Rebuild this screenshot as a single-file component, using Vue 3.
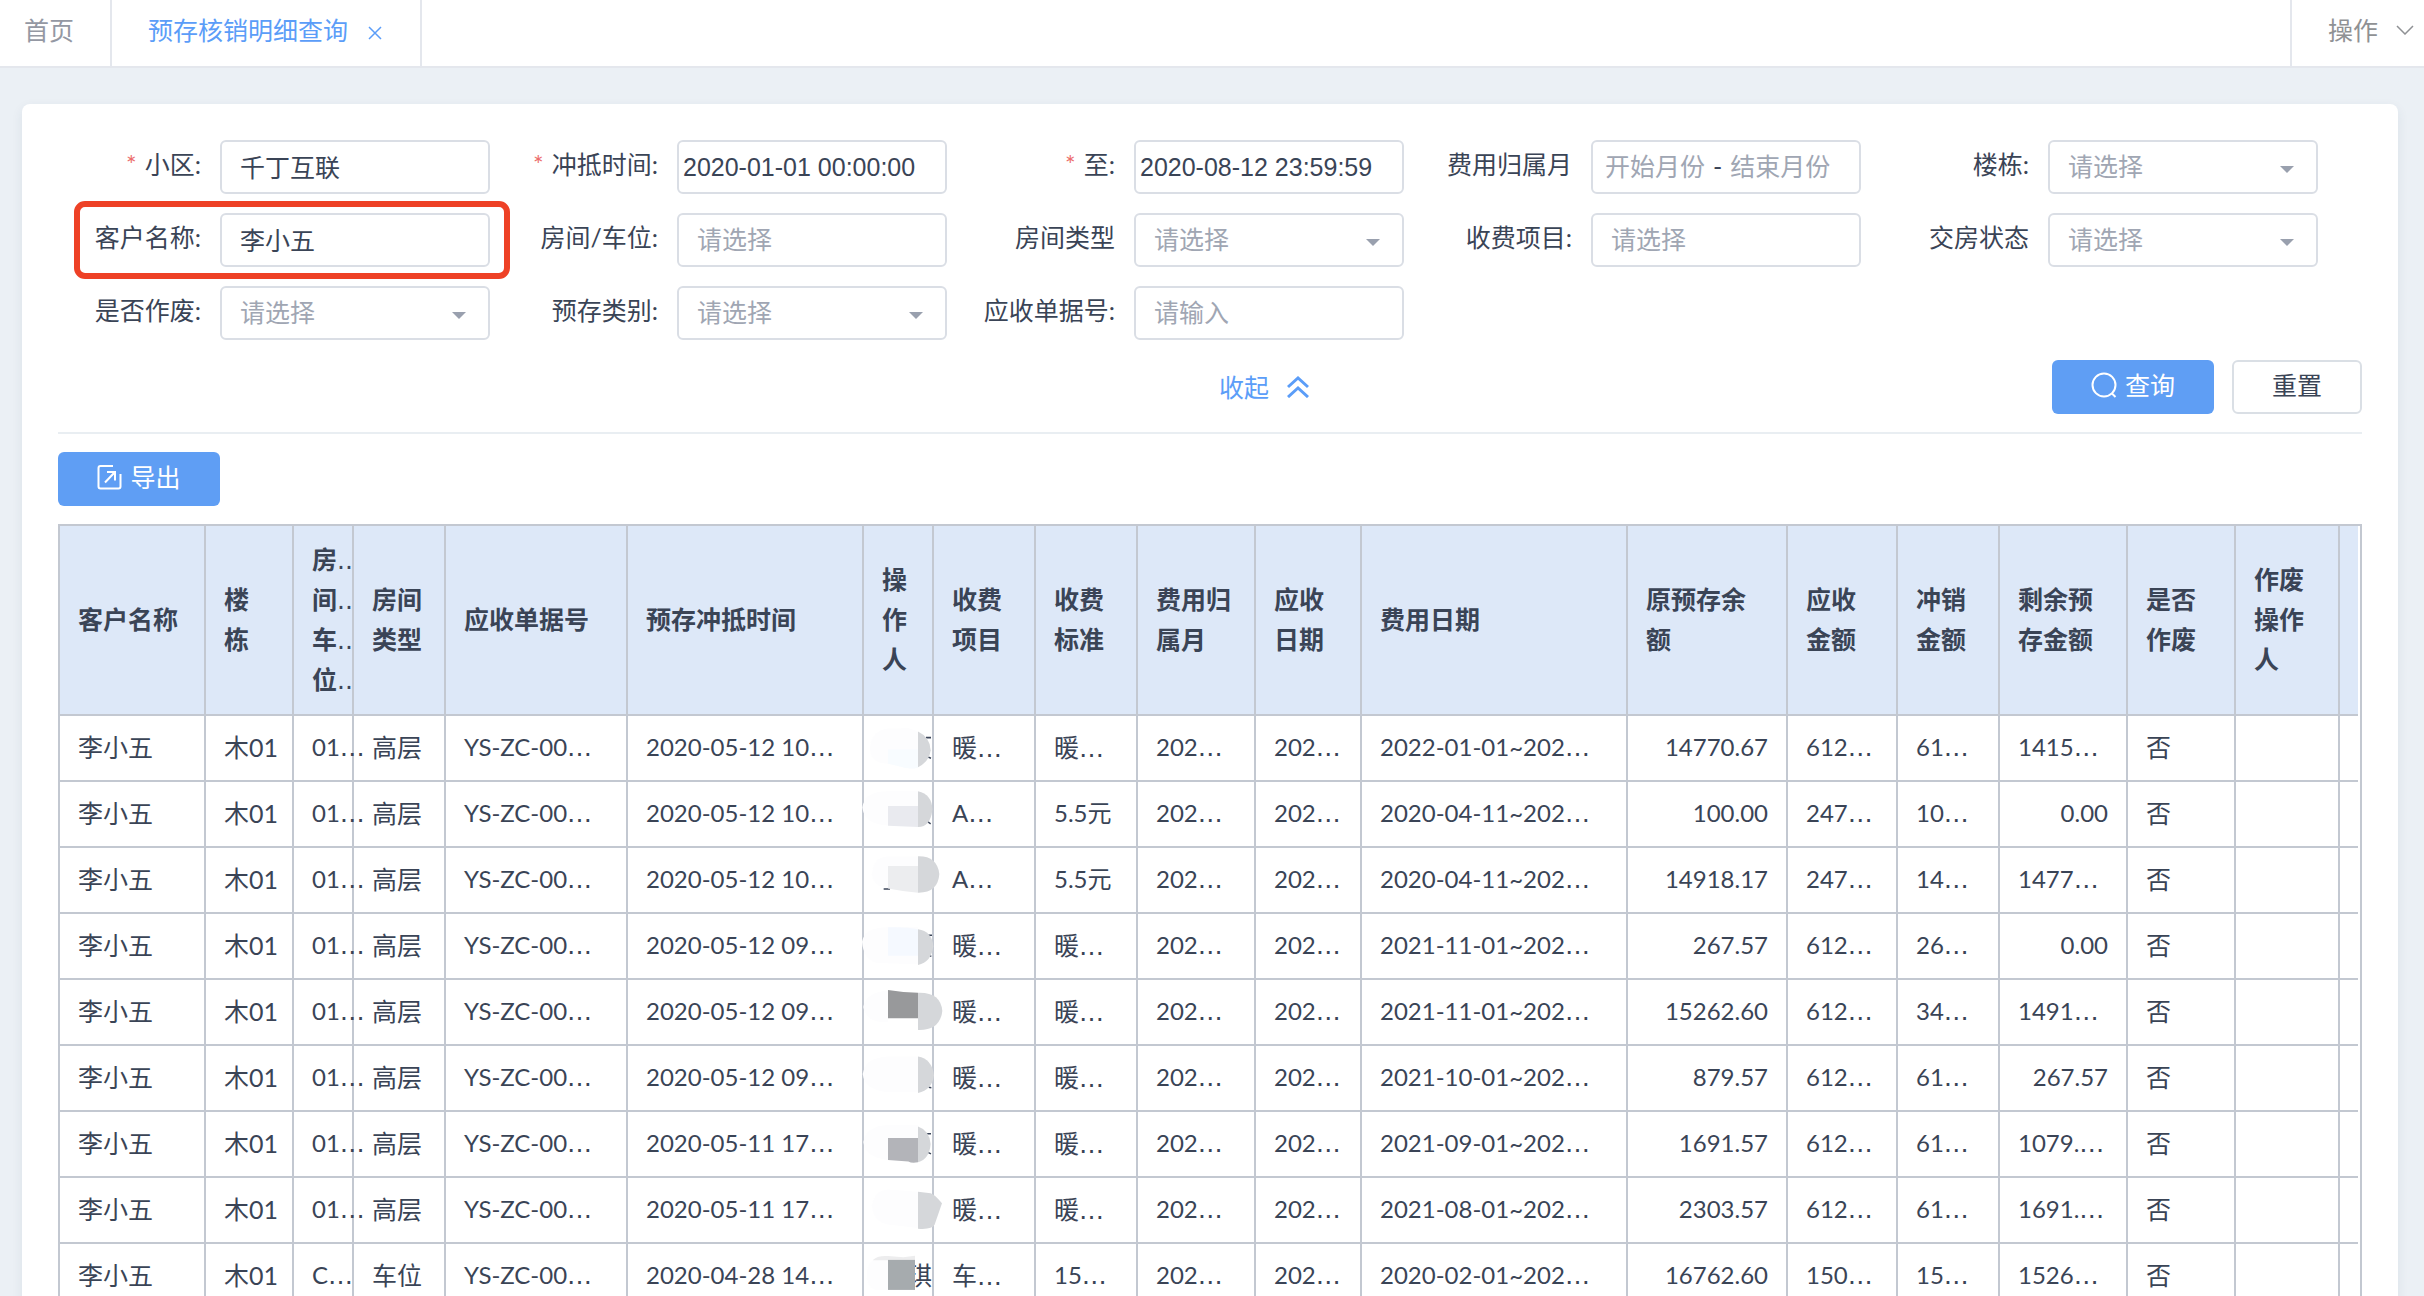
<script setup>
import { ref } from 'vue'

const fields = [
  { id: 'community', label: '小区:', required: true, type: 'text', value: '千丁互联' },
  { id: 'offset-from', label: '冲抵时间:', required: true, type: 'date', value: '2020-01-01 00:00:00' },
  { id: 'offset-to', label: '至:', required: true, type: 'date', value: '2020-08-12 23:59:59' },
  { id: 'fee-month', label: '费用归属月', type: 'range' },
  { id: 'building', label: '楼栋:', type: 'select' },
  { id: 'customer', label: '客户名称:', type: 'text', value: '李小五', marked: true },
  { id: 'room', label: '房间/车位:', type: 'text', placeholder: '请选择' },
  { id: 'room-type', label: '房间类型', type: 'select' },
  { id: 'fee-item', label: '收费项目:', type: 'text', placeholder: '请选择' },
  { id: 'handover', label: '交房状态', type: 'select' },
  { id: 'voided', label: '是否作废:', type: 'select' },
  { id: 'deposit-type', label: '预存类别:', type: 'select' },
  { id: 'bill-no', label: '应收单据号:', type: 'text', placeholder: '请输入' },
]

const columns = [
  { title: '客户名称', width: 146 },
  { title: '楼栋', width: 88 },
  { title: '房间车位', width: 60, clipped: true },
  { title: '房间类型', width: 92 },
  { title: '应收单据号', width: 182 },
  { title: '预存冲抵时间', width: 236 },
  { title: '操作人', width: 70 },
  { title: '收费项目', width: 102 },
  { title: '收费标准', width: 102 },
  { title: '费用归属月', width: 118 },
  { title: '应收日期', width: 106 },
  { title: '费用日期' },
  { title: '原预存余额', width: 160, right: true },
  { title: '应收金额', width: 110 },
  { title: '冲销金额', width: 102 },
  { title: '剩余预存金额', width: 128, right: true },
  { title: '是否作废', width: 108 },
  { title: '作废操作人', width: 104 },
  { title: '', width: 18 },
]

const row = (room, type, time, item, std, period, before, due, used, left, operator = '') => [
  '李小五', '木01', room, type, 'YS-ZC-00…', time, operator, item, std, '202…', '202…',
  period, before, due, used, left, '否', '', '',
]

const rows = [
  row('01…', '高层', '2020-05-12 10…', '暖…', '暖…', '2022-01-01~202…', '14770.67', '612…', '61…', '1415…'),
  row('01…', '高层', '2020-05-12 10…', 'A…', '5.5元', '2020-04-11~202…', '100.00', '247…', '10…', '0.00'),
  row('01…', '高层', '2020-05-12 10…', 'A…', '5.5元', '2020-04-11~202…', '14918.17', '247…', '14…', '1477…'),
  row('01…', '高层', '2020-05-12 09…', '暖…', '暖…', '2021-11-01~202…', '267.57', '612…', '26…', '0.00'),
  row('01…', '高层', '2020-05-12 09…', '暖…', '暖…', '2021-11-01~202…', '15262.60', '612…', '34…', '1491…'),
  row('01…', '高层', '2020-05-12 09…', '暖…', '暖…', '2021-10-01~202…', '879.57', '612…', '61…', '267.57'),
  row('01…', '高层', '2020-05-11 17…', '暖…', '暖…', '2021-09-01~202…', '1691.57', '612…', '61…', '1079.…'),
  row('01…', '高层', '2020-05-11 17…', '暖…', '暖…', '2021-08-01~202…', '2303.57', '612…', '61…', '1691.…'),
  row('C…', '车位', '2020-04-28 14…', '车…', '15…', '2020-02-01~202…', '16762.60', '150…', '15…', '1526…', '琪'),
]

const form = ref(Object.fromEntries(fields.map((f) => [f.id, f.value || ''])))
const isWide = (text) => /^[\u4e00-\u9fff]/.test(text)
</script>

<template>
  <div class="page">
    <nav class="tabs">
      <a href="#" class="tab home">首页</a>
      <div class="tab active">
        <a href="#">预存核销明细查询</a>
        <button type="button" class="close" aria-label="关闭">
          <svg width="14" height="14" viewBox="0 0 14 14"><path d="M1 1 13 13M13 1 1 13" /></svg>
        </button>
      </div>
      <button type="button" class="tab ops">
        操作
        <svg width="18" height="10" viewBox="0 0 18 10"><path d="M1 1 9 9 17 1" /></svg>
      </button>
    </nav>

    <main class="card">
      <form @submit.prevent>
        <div class="fields">
          <div v-for="f in fields" :key="f.id" class="field" :class="{ marked: f.marked }">
            <label :for="f.id"><span v-if="f.required" class="star">*</span>{{ f.label }}</label>
            <div v-if="f.type === 'select'" class="control picker">
              <select :id="f.id" v-model="form[f.id]">
                <option value="">请选择</option>
              </select>
            </div>
            <div v-else-if="f.type === 'range'" class="control range">
              <input :id="f.id" type="text" placeholder="开始月份" />
              <span>-</span>
              <input type="text" placeholder="结束月份" aria-label="结束月份" />
            </div>
            <input
              v-else
              :id="f.id"
              v-model="form[f.id]"
              type="text"
              class="control"
              :class="{ date: f.type === 'date' }"
              :placeholder="f.placeholder"
            />
          </div>
        </div>

        <div class="actions">
          <a href="#" class="fold">
            收起
            <svg width="22" height="22" viewBox="0 0 22 22"><path d="M1 11 11 2 21 11M1 21 11 12 21 21" /></svg>
          </a>
          <button type="submit" class="btn primary">
            <svg width="26" height="26" viewBox="0 0 26 26">
              <circle cx="13" cy="13" r="11.5" /><path d="M20.500 21 24.500 25" />
            </svg>
            查询
          </button>
          <button type="reset" class="btn plain">重置</button>
        </div>
      </form>

      <button type="button" class="btn primary export">
        <svg width="25" height="26" viewBox="0 0 25 26">
          <path d="M16 2H3.500Q1.500 2 1.500 4V22.500Q1.500 24.500 3.500 24.500H21.500Q23.500 24.500 23.500 22.500V10" />
          <path d="M8 18.500 18 8M10 8H18V16.500" />
        </svg>
        导出
      </button>

      <div class="grid">
        <table>
          <colgroup>
            <col v-for="(c, i) in columns" :key="i" :style="c.width ? { width: c.width + 'px' } : null" />
          </colgroup>
          <thead>
            <tr>
              <th v-for="(c, i) in columns" :key="i" :class="{ clipped: c.clipped }">
                <template v-if="c.clipped">
                  <div v-for="ch in c.title" :key="ch">{{ ch }}<span class="dots">..</span></div>
                </template>
                <template v-else>{{ c.title }}</template>
              </th>
            </tr>
          </thead>
          <tbody>
            <tr v-for="(r, n) in rows" :key="n">
              <td
                v-for="(cell, i) in r"
                :key="i"
                :class="{
                  wide: isWide(cell),
                  right: columns[i].right && !cell.endsWith('…'),
                  operator: i === 6,
                  anchor: i === 6 && n === 0,
                }"
              >
                {{ cell.replace('…', '') }}<span v-if="cell.endsWith('…')" class="dots">…</span>
                <svg
                  v-if="n === 0 && i === 6"
                  class="masks"
                  viewBox="0 0 720 1568"
                  preserveAspectRatio="none"
                  aria-hidden="true"
                >
                  <g fill="none" stroke="#3c465a" stroke-width="4">
                    <path d="M258 99H273M264 150 273 153M262 319 272 326M131 497H150M262 619H276M268 673 274 674M266 1019 274 1020M258 1141H273M264 1190 273 1194" />
                  </g>
                  <g fill="#fdfdfe">
                    <path d="M90 128Q94 80 144 75L205 74 234 83V178Q205 184 180 175L144 168Q92 166 90 128Z" />
                    <path d="M67 283Q74 240 144 240H234V279H144V330Q74 328 67 283Z" />
                    <path d="M96 460Q100 412 144 412H234V500L144 494Q100 490 96 460Z" />
                    <path d="M66 636Q74 598 144 598H234V695L110 692Q70 680 66 636Z" />
                    <path d="M70 808Q78 768 144 765V848Q78 850 70 808Z" />
                    <path d="M68 984Q78 940 144 938H234V1032H144Q74 1026 68 984Z" />
                    <path d="M70 1163Q80 1120 144 1118H234V1152H144V1210Q76 1204 70 1163Z" />
                    <path d="M96 1330Q104 1290 144 1288L234 1294V1389L144 1380Q100 1372 96 1330Z" />
                    <path d="M80 1512Q84 1470 120 1466H225V1552H110Q82 1548 80 1512Z" />
                  </g>
                  <g fill="#d5d7da">
                    <path d="M234 83Q270 98 272 132 268 162 234 177Z" />
                    <path d="M234 240Q276 248 277 288 272 334 234 334Z" />
                    <path d="M234 411Q292 410 298 458 294 508 234 507Z" />
                    <path d="M234 603Q276 608 280 648 274 690 234 697Z" />
                    <path d="M234 770Q302 768 307 818 300 870 234 868Z" />
                    <path d="M234 938Q276 944 282 988 276 1026 234 1034Z" />
                    <path d="M234 1122Q268 1132 272 1168 268 1208 234 1216Z" />
                    <path d="M234 1294 272 1298Q282 1300 306 1324L284 1380Q276 1394 234 1391Z" />
                  </g>
                  <path fill="#f8fcff" d="M144 130H234V178Q205 184 180 175L144 168Z" />
                  <path fill="#e9eaef" d="M144 279H234V334L144 331Z" />
                  <path fill="#ecedef" d="M144 437H234V507Q190 504 144 496Z" />
                  <path fill="#f5f9ff" d="M144 598Q200 596 234 603V673H144Z" />
                  <path fill="#98999b" d="M144 763 190 768 234 770V837H144Z" />
                  <path fill="#b3b4b9" d="M144 1152H234V1216Q215 1219 205 1214L144 1210Z" />
                  <path fill="#ededee" d="M98 1474Q112 1461 144 1463L190 1466 225 1462V1474Z" />
                  <path fill="#a6abae" d="M144 1473H225V1552H144Z" />
                </svg>
              </td>
            </tr>
          </tbody>
        </table>
      </div>
    </main>
  </div>
</template>

<style>
body {
  margin: 0;
}
</style>

<style scoped>
* {
  box-sizing: border-box;
}

.page {
  height: 100vh;
  overflow: hidden;
  background: #ebf0f5;
  color: #3a4456;
  font: 25px/40px Lato, 'Noto Sans CJK SC', sans-serif;
}

button,
input,
select {
  font: inherit;
  color: inherit;
}

a {
  color: inherit;
  text-decoration: none;
}

svg {
  flex: none;
  fill: none;
  stroke: currentColor;
}

.tabs {
  display: flex;
  height: 68px;
  border-bottom: 2px solid #e4e7ed;
  background: #fff;
}

.tab {
  display: flex;
  align-items: center;
  padding: 0 36px 6px;
  border: 0 solid #e4e7ed;
  background: none;
}

.home {
  padding-left: 24px;
  border-right-width: 2px;
  color: #9498a3;
}

.active {
  gap: 18px;
  border-right-width: 2px;
  color: #5b9df8;
}

.close {
  display: flex;
  padding: 6px 2px 0;
  border: 0;
  background: none;
}

.ops {
  gap: 18px;
  margin-left: auto;
  padding-right: 10px;
  border-left-width: 2px;
  color: #8f9194;
}

.close svg,
.ops svg {
  stroke-width: 1.5;
}

.card {
  margin: 36px 26px 0 22px;
  padding: 36px;
  border-radius: 8px;
  background: #fff;
  box-shadow: 0 4px 12px rgba(40, 60, 90, 0.08);
}

.fields {
  display: grid;
  grid-template-columns: repeat(5, 1fr);
  gap: 19px 0;
  margin: 0 44px 0 -25px;
}

.field {
  position: relative;
  display: flex;
  justify-content: flex-end;
  gap: 19px;
}

.field label {
  line-height: 48px;
  white-space: nowrap;
}

.star {
  margin-right: 8px;
  color: #ec6d6d;
}

.marked::after {
  content: '';
  position: absolute;
  inset: -12px -20px -12px 41px;
  border: 6px solid #ee4126;
  border-radius: 11px;
  pointer-events: none;
}

.control {
  width: 270px;
  height: 54px;
  padding: 0 18px 2px;
  border: 2px solid #dadee5;
  border-radius: 6px;
  background: #fff;
}

.date {
  padding: 0 4px;
  font-family: 'Liberation Sans', Arial, sans-serif;
}

input::placeholder {
  color: #a0a6b3;
  opacity: 1;
}

.picker {
  position: relative;
  padding: 0;
}

.picker::after {
  content: '';
  position: absolute;
  top: 24px;
  right: 22px;
  border: 7px solid transparent;
  border-top-color: #99a0ae;
  border-bottom: 0;
  pointer-events: none;
}

.picker select {
  width: 100%;
  height: 100%;
  padding: 0 18px 2px;
  border: 0;
  background: none;
  color: #a0a6b3;
  appearance: none;
}

.range {
  display: flex;
  align-items: center;
  gap: 8px;
  padding: 0 12px 2px;
}

.range input {
  width: 100px;
  padding: 0;
  border: 0;
  background: none;
}

.actions {
  display: flex;
  gap: 18px;
  margin-top: 20px;
  padding-bottom: 18px;
  border-bottom: 2px solid #e9eef2;
}

.fold {
  display: flex;
  align-items: center;
  gap: 18px;
  margin-right: auto;
  margin-left: calc(50% + 9px);
  color: #5b9df8;
}

.fold svg {
  stroke-width: 3;
}

.btn {
  display: flex;
  align-items: center;
  justify-content: center;
  gap: 8px;
  width: 162px;
  height: 54px;
  padding: 0 0 5px;
  border: 0;
  border-radius: 6px;
}

.btn svg {
  stroke-width: 2;
}

.primary {
  background: #5f9ef4;
  color: #fff;
}

.plain {
  width: 130px;
  border: 2px solid #dadfe5;
  background: #fff;
}

.export {
  margin: 18px 0;
}

.grid {
  padding-right: 2px;
  border: 2px solid #c3c8d1;
  overflow-x: auto;
}

table {
  width: 100%;
  table-layout: fixed;
  border-spacing: 0;
}

th,
td {
  padding: 0 19px 2px 18px;
  border: 0 solid #c3c8d1;
  border-width: 0 2px 2px 0;
  text-align: left;
}

th:last-child,
td:last-child {
  padding: 0;
  border-right: 0;
}

th {
  height: 190px;
  background: #dde8f8;
  font-weight: 600;
}

.clipped {
  padding-right: 0;
  white-space: nowrap;
}

.clipped .dots {
  font-weight: 400;
}

td {
  height: 66px;
  font-size: 24px;
  white-space: nowrap;
}

.wide,
.dots {
  font-size: 25px;
}

.dots {
  font-family: 'DejaVu Sans', sans-serif;
  line-height: 1;
}

.right {
  padding-right: 18px;
  text-align: right;
}

.operator {
  padding: 0 0 2px 43px;
}

.anchor {
  position: relative;
}

.masks {
  position: absolute;
  top: -16px;
  left: -24px;
  width: 240px;
  height: 596px;
  stroke: none;
}
</style>
